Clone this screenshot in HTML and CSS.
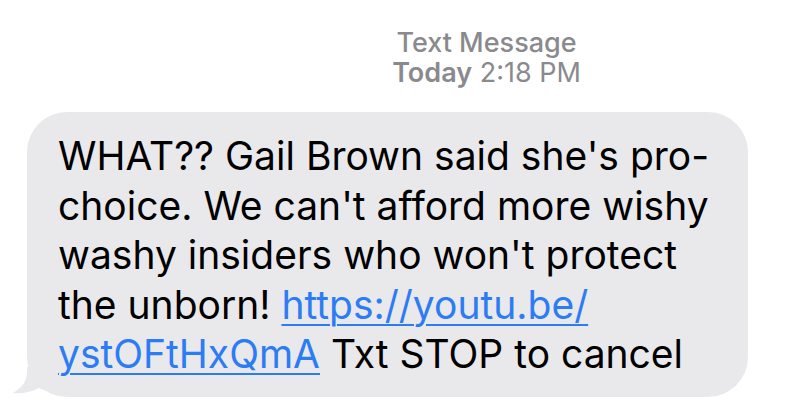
FILE: index.html
```html
<!DOCTYPE html>
<html>
  <head>
    <meta charset="UTF-8" />
    <title>Text Message</title>
    <link rel="stylesheet" href="styles.css">
  </head>
  <body>
    <div class="thread">
      <div class="thread-header">
        <div class="thread-kind">Text Message</div>
        <div class="thread-time"><b>Today</b> 2:18 PM</div>
      </div>

      <div class="bubble">
        <p class="bubble-text">
          WHAT?? Gail Brown said she's pro-<br>
          choice. We can't afford more wishy<br>
          washy insiders who won't protect<br>
          the unborn! <a href="#">https://youtu.be/<br>ystOFtHxQmA</a> Txt STOP to cancel
        </p>
        <!-- tail of the bubble -->
        <svg class="bubble-tail" width="40" height="30" viewBox="0 0 40 30">
          <path d="M14 0 L14 4 C14 14 10 20 0 26 C9 27 19 25 26 21 C30 23 34 24 40 25 L40 0 Z" />
        </svg>
      </div>
    </div>
  </body>
</html>
```

FILE: styles.css
```css
*,
*::after,
*::before {
  box-sizing: border-box;
}
body {
  margin: 0;
  background-color: #fff;
  font-family: Inter, 'Liberation Sans', sans-serif;
}
.thread {
  padding: 28px 58px 0 13px;
}
/* 헤더: 날짜와 종류 */
.thread-header {
  padding-left: 212px;
  text-align: center;
  color: #8a8a8e;
  font-size: 27px;
  line-height: 30px;
}
.thread-kind {
  font-weight: 500;
}
.thread-time b {
  font-weight: 600;
}
.bubble {
  position: relative;
  margin: 24px 0 0 14px;
  padding: 19px 20px 18px 31px;
  background-color: #e9e9eb;
  border-radius: 40px;
}
.bubble-text {
  margin: 0;
  color: #000;
  font-size: 39px;
  line-height: 49.5px;
  white-space: nowrap;
}
.bubble-text a {
  color: #2c7cf5;
  text-decoration-thickness: 2px;
  text-underline-offset: 5px;
}
.bubble-tail {
  position: absolute;
  left: -14px;
  bottom: 0;
  fill: #e9e9eb;
}
```
